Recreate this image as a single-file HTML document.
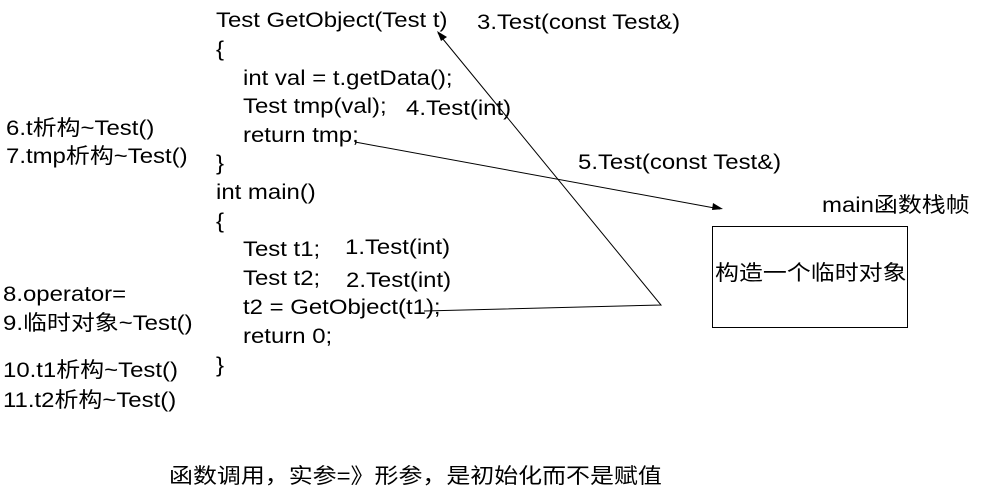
<!DOCTYPE html>
<html><head><meta charset="utf-8"><style>
body{margin:0;width:1004px;height:495px;background:#fff;position:relative;overflow:hidden;font-family:"Liberation Sans","Noto Sans CJK SC",sans-serif;font-size:21px;color:#000}
.t{position:absolute;white-space:nowrap;line-height:22px;transform:scaleX(1.14);transform-origin:0 50%}
</style></head><body>
<div class="t" style="left:216px;top:10px">Test GetObject(Test t)</div>
<div class="t" style="left:216px;top:39px">{</div>
<div class="t" style="left:243px;top:68px">int val = t.getData();</div>
<div class="t" style="left:243px;top:96px">Test tmp(val);</div>
<div class="t" style="left:243px;top:125px">return tmp;</div>
<div class="t" style="left:216px;top:153px">}</div>
<div class="t" style="left:216px;top:182px">int main()</div>
<div class="t" style="left:216px;top:211px">{</div>
<div class="t" style="left:243px;top:239px">Test t1;</div>
<div class="t" style="left:243px;top:268px">Test t2;</div>
<div class="t" style="left:243px;top:297px">t2 = GetObject(t1);</div>
<div class="t" style="left:243px;top:326px">return 0;</div>
<div class="t" style="left:216px;top:355px">}</div>
<div class="t" style="left:477px;top:12px">3.Test(const Test&amp;)</div>
<div class="t" style="left:406px;top:98px">4.Test(int)</div>
<div class="t" style="left:578px;top:152px">5.Test(const Test&amp;)</div>
<div class="t" style="left:345px;top:237px">1.Test(int)</div>
<div class="t" style="left:346px;top:270px">2.Test(int)</div>
<div class="t" style="left:822px;top:195px">main函数栈帧</div>
<div style="position:absolute;left:712px;top:226px;width:196px;height:102px;border:1px solid #000;box-sizing:border-box"></div>
<div class="t" style="left:715px;top:263px">构造一个临时对象</div>
<div class="t" style="left:6px;top:118px">6.t析构~Test()</div>
<div class="t" style="left:6px;top:146px">7.tmp析构~Test()</div>
<div class="t" style="left:3px;top:284px">8.operator=</div>
<div class="t" style="left:3px;top:313px">9.临时对象~Test()</div>
<div class="t" style="left:3px;top:360px">10.t1析构~Test()</div>
<div class="t" style="left:3px;top:390px">11.t2析构~Test()</div>
<div class="t" style="left:169px;top:466px">函数调用，实参=》形参，是初始化而不是赋值</div>
<svg width="1004" height="495" style="position:absolute;left:0;top:0">
<g stroke="#000" stroke-width="1" fill="none">
<polyline points="424,311 661,305 438,33"/>
<line x1="355" y1="142" x2="720" y2="209"/>
</g>
<polygon points="437,31 447,37 441,41" fill="#000"/>
<polygon points="723,209 713,203 712,210" fill="#000"/>
</svg>
</body></html>
